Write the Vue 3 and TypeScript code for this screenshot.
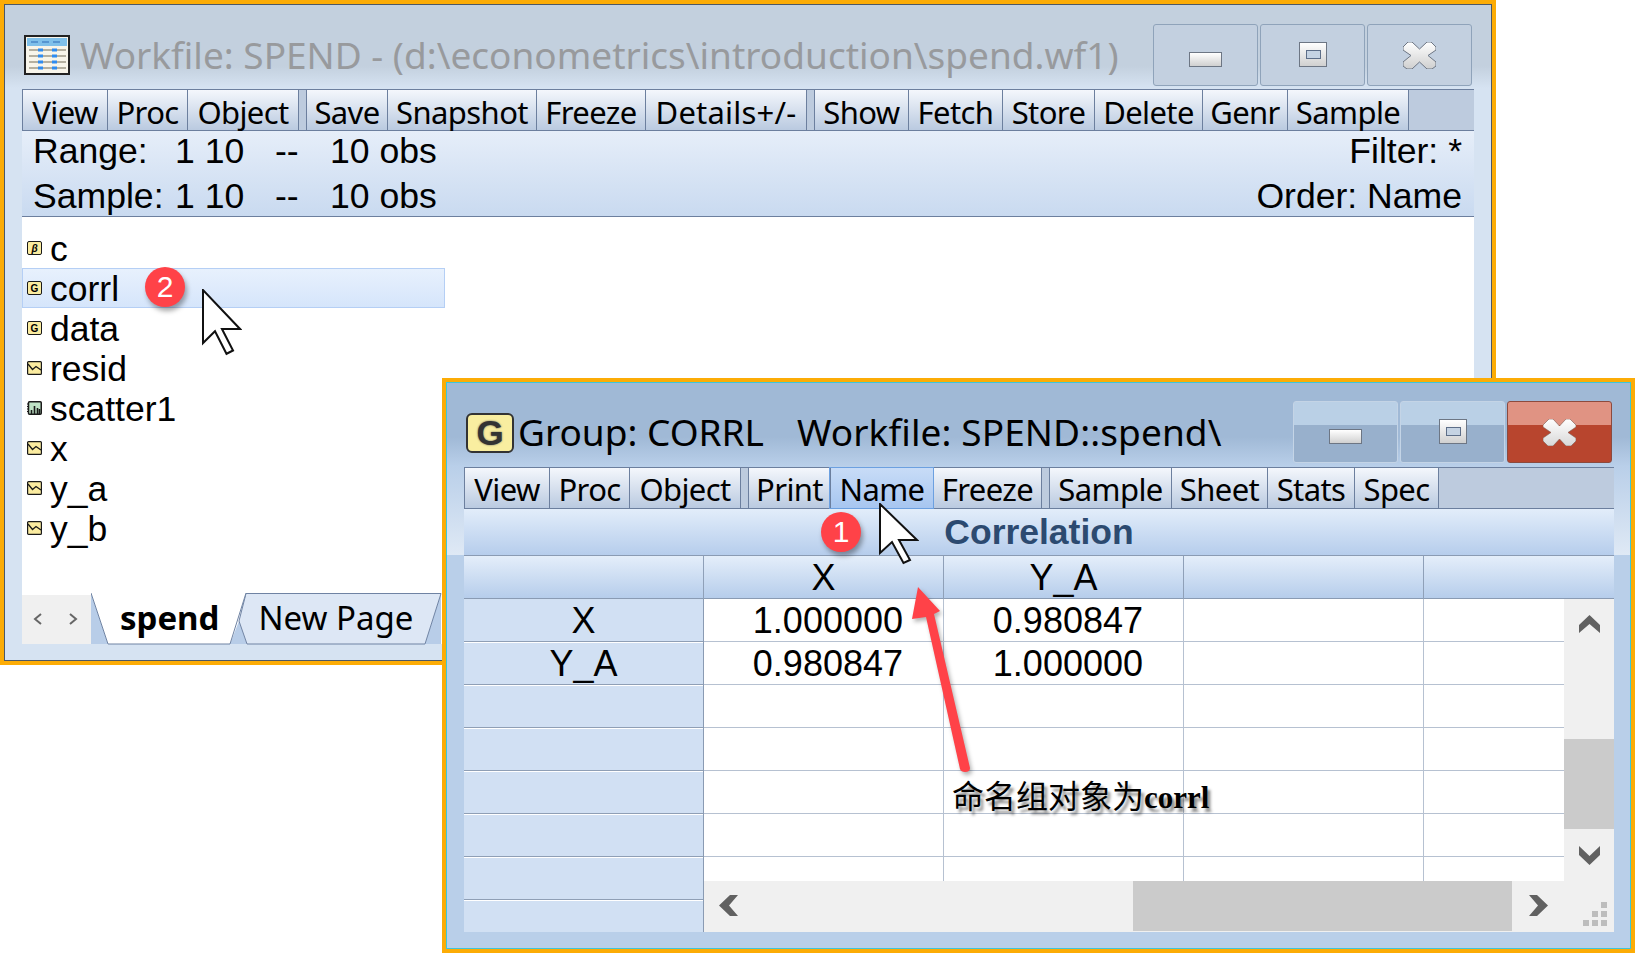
<template>
  <div class="desk">
    <!-- back window -->
    <section class="win win-back">
      <header class="titlebar">
        <svg class="wf-icon" viewBox="0 0 46 40">
          <rect x="1" y="1" width="44" height="38" fill="#f8f5ea" stroke="#222" stroke-width="2" />
          <rect x="3" y="3" width="40" height="8" fill="#7fc0ea" />
          <path d="M7 7h7M18 7h7M29 7h7" stroke="#4a86c8" stroke-width="1.5" />
          <g v-for="y in [15, 21, 27, 33]" :key="y">
            <path :d="`M5 ${y}h9M19 ${y}h9M33 ${y}h9`" stroke="#b5b0a0" stroke-width="2" />
            <path :d="`M14 ${y}h5M28 ${y}h5`" stroke="#2f8cf0" stroke-width="3" />
          </g>
        </svg>
        <h1 class="title title-off">Workfile: SPEND - (d:\econometrics\introduction\spend.wf1)</h1>
        <div class="controls">
          <button class="ctl"><span class="ic-min"></span></button>
          <button class="ctl"><span class="ic-max"></span></button>
          <button class="ctl">
            <svg class="ic-x" viewBox="0 0 33 27"><path :d="closePath" fill="url(#xfill)" stroke="#6d7684" stroke-width="1" /><defs><linearGradient id="xfill" x1="0" y1="0" x2="0" y2="1"><stop offset="0" stop-color="#fff" /><stop offset="1" stop-color="#cfcfcf" /></linearGradient></defs></svg>
          </button>
        </div>
      </header>

      <nav class="toolbar">
        <template v-for="b in backTools" :key="b.label">
          <i v-if="b.sep" class="tool-sep"></i>
          <span class="tool" :style="{ width: b.width + 'px', letterSpacing: (b.spacing ?? -0.6) + 'px' }">{{ b.label }}</span>
        </template>
      </nav>

      <div class="info">
        <div class="info-row"><span class="c1">Range:</span><span class="c2">1 10</span><span class="c3">--</span><span>10 obs</span><span class="info-right">Filter: *</span></div>
        <div class="info-row"><span class="c1">Sample:</span><span class="c2">1 10</span><span class="c3">--</span><span>10 obs</span><span class="info-right">Order: Name</span></div>
      </div>

      <ul class="list">
        <li v-for="o in objects" :key="o.name" class="obj" :class="{ hot: o.name === 'corrl' }">
          <span v-if="o.kind === 'coef'" class="mini">β</span>
          <span v-else-if="o.kind === 'group'" class="mini mini-g">G</span>
          <svg v-else-if="o.kind === 'series'" class="mini-svg" viewBox="0 0 15 14">
            <rect x="0.6" y="0.6" width="13.8" height="12.8" rx="1" fill="#fbeca0" stroke="#1a1a1a" stroke-width="1.2" />
            <path d="M1 3L5.500 8.500 9 5.500 14 9" fill="none" stroke="#1a1a1a" stroke-width="1.300" />
          </svg>
          <svg v-else class="mini-svg" viewBox="0 0 15 14">
            <rect x="1.5" y="0.75" width="12.75" height="12.5" rx="1" fill="#bfe3c6" stroke="#1a1a1a" stroke-width="1.5" />
            <path d="M0 3h2M0 5.500h2M0 8h2M0 10.500h2" stroke="#1a1a1a" stroke-width="1" />
            <path d="M4.500 13V9M7.500 13V5M10.500 13V7M12.500 13V8" stroke="#1a1a1a" stroke-width="1.600" />
          </svg>
          <span class="obj-name">{{ o.name }}</span>
        </li>
      </ul>

      <footer class="tabs">
        <div class="tab-nav">
          <svg width="12" height="14" viewBox="0 0 12 14"><path d="M9 2L3 7l6 5" fill="none" stroke="#666" stroke-width="2" /></svg>
          <svg width="12" height="14" viewBox="0 0 12 14"><path d="M3 2l6 5-6 5" fill="none" stroke="#666" stroke-width="2" /></svg>
        </div>
        <div class="tab-strip">
          <svg class="tab-bg" width="360" height="52" viewBox="0 0 360 52">
            <path d="M0 0L17 51H0Z" fill="#b8cde8" />
            <path d="M139 51L148 28 156 51Z" fill="#b8cde8" />
            <path d="M334 51L350 0V51Z" fill="#b8cde8" />
            <path d="M155 .5H350L334 51H156L148 28Z" fill="#dde7f5" stroke="#6f83a3" />
            <path d="M0 0L17 51H139L155 0" fill="#fff" stroke="#6f83a3" />
          </svg>
          <span class="tab tab-on">spend</span>
          <span class="tab">New Page</span>
        </div>
      </footer>
    </section>

    <!-- front window -->
    <section class="win win-front">
      <header class="titlebar">
        <span class="g-icon">G</span>
        <h1 class="title"><span>Group: CORRL</span><span class="title-b">Workfile: SPEND::spend\</span></h1>
        <div class="controls">
          <button class="ctl ctl-on"><span class="ic-min"></span></button>
          <button class="ctl ctl-on"><span class="ic-max"></span></button>
          <button class="ctl ctl-close">
            <svg class="ic-x" viewBox="0 0 33 27"><path :d="closePathBold" fill="url(#xfill2)" stroke="#7d5a50" stroke-width="0.6" /><defs><linearGradient id="xfill2" x1="0" y1="0" x2="0" y2="1"><stop offset="0" stop-color="#fff" /><stop offset="1" stop-color="#d8d8d8" /></linearGradient></defs></svg>
          </button>
        </div>
      </header>

      <nav class="toolbar">
        <template v-for="b in frontTools" :key="b.label">
          <i v-if="b.sep" class="tool-sep"></i>
          <span class="tool" :class="{ 'tool-hover': b.label === 'Name' }" :style="{ width: b.width + 'px' }">{{ b.label }}</span>
        </template>
      </nav>

      <div class="caption">Correlation</div>

      <div class="head-row">
        <span class="head-cell"></span>
        <span class="head-cell">X</span>
        <span class="head-cell">Y_A</span>
        <span class="head-cell"></span>
        <span class="head-cell"></span>
      </div>

      <div class="sheet">
        <div class="row-heads">
          <div v-for="(r, i) in rowHeads" :key="i" class="row-head">{{ r }}</div>
        </div>
        <div class="sheet-main">
          <div class="sheet-top">
            <div class="cells">
              <template v-for="(row, i) in cells" :key="i">
                <div v-for="(c, j) in row" :key="j" class="cell">{{ c }}</div>
              </template>
            </div>
            <div class="vscroll">
              <div class="v-end v-up">
                <svg width="21" height="18" viewBox="0 0 21 18"><path d="M0 10L10.500 0 21 10V18L10.500 9 0 18Z" fill="#616161" /></svg>
              </div>
              <div class="v-thumb"></div>
              <div class="v-end v-down">
                <svg width="21" height="19" viewBox="0 0 21 19"><path d="M0 0L10.500 10 21 0V9L10.500 19 0 9Z" fill="#616161" /></svg>
              </div>
            </div>
          </div>
          <div class="hscroll">
            <div class="h-left">
              <svg width="19" height="21" viewBox="0 0 19 21"><path d="M19 0H11L0 10.500 11 21H19L10 10.500Z" fill="#616161" /></svg>
            </div>
            <div class="h-thumb"></div>
            <div class="h-right">
              <svg width="19" height="21" viewBox="0 0 19 21"><path d="M0 0H8L19 10.500 8 21H0L9 10.500Z" fill="#616161" /></svg>
              <div class="grip"><i v-for="n in 9" :key="n" :class="{ off: [1, 2, 4].includes(n) }"></i></div>
            </div>
          </div>
        </div>
      </div>
    </section>

    <!-- annotations -->
    <span class="badge badge-2">2</span>
    <span class="badge badge-1">1</span>
    <svg class="cursor cursor-2" width="40" height="67" viewBox="-1 -1 40 62" preserveAspectRatio="none"><path :d="cursorPath" fill="#fff" stroke="#111" stroke-width="2" /></svg>
    <svg class="cursor cursor-1" width="40" height="62" viewBox="-1 -1 40 62"><path :d="cursorPath" fill="#fff" stroke="#111" stroke-width="2" /></svg>
    <svg class="arrow" width="90" height="200" viewBox="0 0 90 200">
      <path d="M10 1L32 25 26 28 62 182Q62 186 57 186 53 186 52 183L18 31 4 33Z" fill="#ff4248" style="filter: drop-shadow(2px 3px 2px rgba(0,0,0,.3))" />
    </svg>
    <span class="note">命名组对象为<b>corrl</b></span>
  </div>
</template>

<script setup lang="ts">
interface Tool { label: string; width: number; sep?: boolean; spacing?: number }
interface Obj { name: string; kind: 'coef' | 'group' | 'series' | 'graph' }

const backTools: Tool[] = [
  { label: 'View', width: 85 },
  { label: 'Proc', width: 80 },
  { label: 'Object', width: 111 },
  { label: 'Save', width: 81, sep: true },
  { label: 'Snapshot', width: 149 },
  { label: 'Freeze', width: 109 },
  { label: 'Details+/-', width: 161, spacing: 0.2 },
  { label: 'Show', width: 94, sep: true },
  { label: 'Fetch', width: 94 },
  { label: 'Store', width: 92 },
  { label: 'Delete', width: 108 },
  { label: 'Genr', width: 85 },
  { label: 'Sample', width: 122 },
]

const frontTools: Tool[] = [
  { label: 'View', width: 85 },
  { label: 'Proc', width: 80 },
  { label: 'Object', width: 111 },
  { label: 'Print', width: 82, sep: true },
  { label: 'Name', width: 103 },
  { label: 'Freeze', width: 108 },
  { label: 'Sample', width: 122, sep: true },
  { label: 'Sheet', width: 96 },
  { label: 'Stats', width: 87 },
  { label: 'Spec', width: 85 },
]

const objects: Obj[] = [
  { name: 'c', kind: 'coef' },
  { name: 'corrl', kind: 'group' },
  { name: 'data', kind: 'group' },
  { name: 'resid', kind: 'series' },
  { name: 'scatter1', kind: 'graph' },
  { name: 'x', kind: 'series' },
  { name: 'y_a', kind: 'series' },
  { name: 'y_b', kind: 'series' },
]

const rowHeads = ['X', 'Y_A', '', '', '', '', '', '']

const cells: string[][] = [
  ['1.000000', '0.980847', '', ''],
  ['0.980847', '1.000000', '', ''],
  ...Array.from({ length: 5 }, () => ['', '', '', '']),
]

const closePath = 'M0 5L5 0H9L16.500 7 24 0H28L33 5V8L25 13.500 33 20V24L29 27H24L16.500 20 9 27H4L0 24V20L8 13.500 0 8Z'
const closePathBold = 'M0 6L6 0H10L16.500 7 23 0H27L33 6V8L25 13.500 33 19V22L28 27H23L16.500 20 10 27H5L0 22V19L8 13.500 0 8Z'
const cursorPath = 'M0 0V49L12 38 23.500 59 30 56 19 36H37Z'
</script>

<style scoped>
.desk { position: relative; width: 1635px; height: 953px; overflow: hidden; background: #fff; font-family: "Liberation Sans", Arial, sans-serif; color: #000; }

.win { position: absolute; box-sizing: border-box; display: flex; flex-direction: column; border: 4px solid #fcac06; padding: 0 18px; box-shadow: inset 0 0 0 1px #4d5866; }
.win-back { left: 0; top: 0; width: 1496px; height: 665px; padding-bottom: 17px; background: linear-gradient(#c3d0de 0, #c3d0de 62px, #d6e3f2 84px); }
.win-front { left: 442px; top: 378px; width: 1193px; height: 575px; padding: 0 17px 17px 18px; background: linear-gradient(#a0b9d6 0, #a0b9d6 55px, #b9cfe9 84px, #dfe9f5 173px, #b9cfe9 173px); box-shadow: inset 0 0 0 1px #3ec6d8; }

.titlebar { flex: none; height: 85px; display: flex; align-items: flex-end; }
.title { margin: 0 0 9px 10px; font: 400 37px/50px "Noto Sans", sans-serif; white-space: nowrap; }
.title-off { color: #989a9d; }
.win-front .title { margin-bottom: 10px; margin-left: 4px; }
.title-b { margin-left: 33px; letter-spacing: 0.1px; }
.wf-icon { width: 46px; height: 40px; margin: 0 0 14px 2px; flex: none; }
.g-icon { box-sizing: border-box; width: 48px; height: 40px; margin: 0 0 14px 2px; flex: none; display: flex; align-items: center; justify-content: center; border: 2px solid #333; border-radius: 6px; background: #f9eea0; font: 700 35px "Liberation Sans", sans-serif; color: #333; text-shadow: 0 0 2px #555; }

.controls { margin: 0 2px 3px auto; display: flex; gap: 2px; }
.win-front .controls { margin-bottom: 4px; }
.ctl { box-sizing: border-box; width: 105px; height: 62px; padding: 0; border: 1px solid #8fa3ba; border-radius: 3px; background: #c3d0e0; display: flex; align-items: center; justify-content: center; position: relative; }
.ctl-on { background: linear-gradient(#bad0e6 0, #bad0e6 23px, #98b0cc 23px, #98b0cc 100%); border-color: #c4d4e6; }
.ctl-close { background: linear-gradient(#e09383 0, #e09383 23px, #b8452e 23px, #b8452e 100%); border-color: #8c4a3e; }
.ic-min { box-sizing: border-box; display: block; width: 33px; height: 15px; margin-top: 8px; border: 1px solid #6d7684; background: linear-gradient(#fff, #d0d0d0); }
.ic-max { box-sizing: border-box; display: block; width: 28px; height: 25px; margin-bottom: 2px; border: 1px solid #6d7684; position: relative; background: linear-gradient(#fff, #d0d0d0); }
.ic-max::after { content: ""; position: absolute; left: 6px; top: 7px; width: 13px; height: 7px; border: 1px solid #5d6e88; background: #c5d3e3; }
.ic-x { width: 33px; height: 27px; }

.toolbar { flex: none; box-sizing: border-box; height: 42px; display: flex; background: #bdcbde; border-top: 1px solid #6c7f9e; border-bottom: 1px solid #6c7f9e; }
.tool { box-sizing: border-box; flex: none; display: flex; align-items: center; justify-content: center; padding-top: 2px; border-left: 1px solid #6c7f9e; background: linear-gradient(#f4f7fc, #bacae0); font: 400 31px/38px "Noto Sans", sans-serif; letter-spacing: -0.6px; white-space: nowrap; }
.win-back .tool { padding-top: 3px; }
.tool:last-child { border-right: 1px solid #6c7f9e; }
.tool-sep { flex: none; width: 7px; border-left: 1px solid #6c7f9e; }
.tool-hover { background: linear-gradient(#c8dcf7, #a7c6f0); box-shadow: 0 0 0 1px #6ca0e0; position: relative; }

.info { flex: none; height: 86px; box-sizing: border-box; display: flex; flex-direction: column; justify-content: center; background: linear-gradient(#e6eef9, #c9daf0); border-bottom: 1px solid #6c7f9e; padding: 0 12px 0 11px; font-size: 35.6px; }
.info-row { flex: none; height: 45px; line-height: 45px; display: flex; white-space: nowrap; }
.c1 { width: 142px; }
.c2 { width: 100px; }
.c3 { width: 55px; }
.info-right { margin-left: auto; }

.list { flex: 1; margin: 0; padding: 11px 0 0; list-style: none; background: #fff; }
.obj { box-sizing: border-box; width: 423px; height: 40px; display: flex; align-items: center; padding-left: 5px; font-size: 35.5px; }
.hot { background: linear-gradient(#e8f1fd, #d5e5fb); box-shadow: inset 0 0 0 1px #b5cff5; }
.obj-name { margin-left: 8px; line-height: 40px; position: relative; top: 1px; }
.mini { box-sizing: border-box; flex: none; width: 15px; height: 14px; display: flex; align-items: center; justify-content: center; border: 1.5px solid #1a1a1a; border-radius: 2px; background: #fbeca0; font: italic 700 10px "Liberation Sans", sans-serif; }
.mini-g { font-style: normal; }
.mini-svg { flex: none; width: 15px; height: 14px; }

.tabs { flex: none; height: 51px; display: flex; align-items: flex-end; background: #fff; }
.tab-nav { box-sizing: border-box; width: 69px; height: 49px; flex: none; padding: 0 12px 2px 10px; display: flex; align-items: center; justify-content: space-between; background: #f0f0f0; }
.tab-strip { position: relative; flex: none; box-sizing: border-box; height: 51px; width: 360px; padding-bottom: 2px; display: flex; align-items: center; font: 400 33px/49px "Noto Sans", sans-serif; }
.tab-bg { position: absolute; left: 0; top: 0; }
.tab { position: relative; white-space: nowrap; margin-left: 39px; }
.tab-on { font-weight: 700; margin-left: 29px; }

.caption { flex: none; height: 47px; line-height: 47px; text-align: center; font-size: 35.5px; font-weight: 700; color: #2c4a70; background: linear-gradient(#e2edfa, #b6cdec); box-sizing: border-box; border-bottom: 1px solid #8a9bb3; }
.head-row { flex: none; box-sizing: border-box; height: 43px; display: grid; grid-template-columns: 240px 240px 240px 240px 1fr; border-bottom: 1px solid #8a9bb3; background: linear-gradient(#e4eefa, #b6cdeb); }
.head-cell { box-sizing: border-box; border-right: 1px solid #8fa0b8; text-align: center; font-size: 36px; line-height: 44px; }
.head-cell:last-child { border-right: 0; }

.sheet { flex: 1; min-height: 0; display: flex; overflow: hidden; }
.row-heads { flex: none; width: 240px; box-sizing: border-box; border-right: 1px solid #8a9bb3; background: #d1e0f3; overflow: hidden; }
.row-head { box-sizing: border-box; height: 43px; line-height: 44px; text-align: center; font-size: 36px; border-bottom: 1px solid #8f9fb5; box-shadow: inset 0 1px #fff; overflow: hidden; }
.row-head:first-child { box-shadow: none; }
.sheet-main { flex: 1; min-width: 0; display: flex; flex-direction: column; }
.sheet-top { flex: none; height: 282px; display: flex; }
.cells { flex: none; width: 860px; height: 282px; overflow: hidden; display: grid; grid-template-columns: 240px 240px 240px 140px; grid-auto-rows: 43px; background: #fff; }
.cell { box-sizing: border-box; border-right: 1px solid #b6c1d1; border-bottom: 1px solid #b6c1d1; text-align: right; padding-right: 40px; font-size: 36px; line-height: 44px; overflow: hidden; }
.cell:nth-child(4n) { border-right: 0; }
.vscroll { flex: 1; display: flex; flex-direction: column; background: #f0f0f0; }
.v-end { display: flex; justify-content: center; }
.v-up { height: 140px; padding-top: 16px; box-sizing: border-box; }
.v-down { flex: 1; padding-top: 17px; }
.v-thumb { flex: none; height: 90px; background: #cbcbcb; }
.hscroll { flex: 1; display: flex; background: #f0f0f0; position: relative; }
.h-left { flex: none; width: 429px; box-sizing: border-box; padding: 14px 0 0 15px; }
.h-thumb { flex: none; width: 379px; background: #cbcbcb; margin-bottom: 1px; }
.h-right { flex: 1; padding: 14px 0 0 17px; }
.grip { position: absolute; right: 7px; bottom: 6px; display: grid; grid-template-columns: repeat(3, 6px); grid-auto-rows: 6px; gap: 3px; }
.grip i { background: #bdbdbd; }
.grip i.off { background: transparent; }

.badge { position: absolute; width: 40px; height: 40px; border-radius: 50%; background: #ff4248; color: #fff; font-size: 30px; line-height: 40px; text-align: center; box-shadow: 2px 4px 5px rgba(0, 0, 0, 0.35); }
.badge-2 { left: 145px; top: 267px; }
.badge-1 { left: 821px; top: 512px; }
.cursor { position: absolute; }
.cursor-2 { left: 202px; top: 289px; }
.cursor-1 { left: 879px; top: 503px; }
.arrow { position: absolute; left: 908px; top: 586px; }
.note { position: absolute; left: 952px; top: 774px; font: 32px/40px "Noto Sans CJK SC", sans-serif; white-space: nowrap; text-shadow: 3px 4px 3px rgba(0, 0, 0, 0.45); }
.note b { font-family: "Liberation Serif", serif; font-weight: 700; font-size: 31px; }
</style>

<style>
html, body { margin: 0; background: #fff; }
</style>
